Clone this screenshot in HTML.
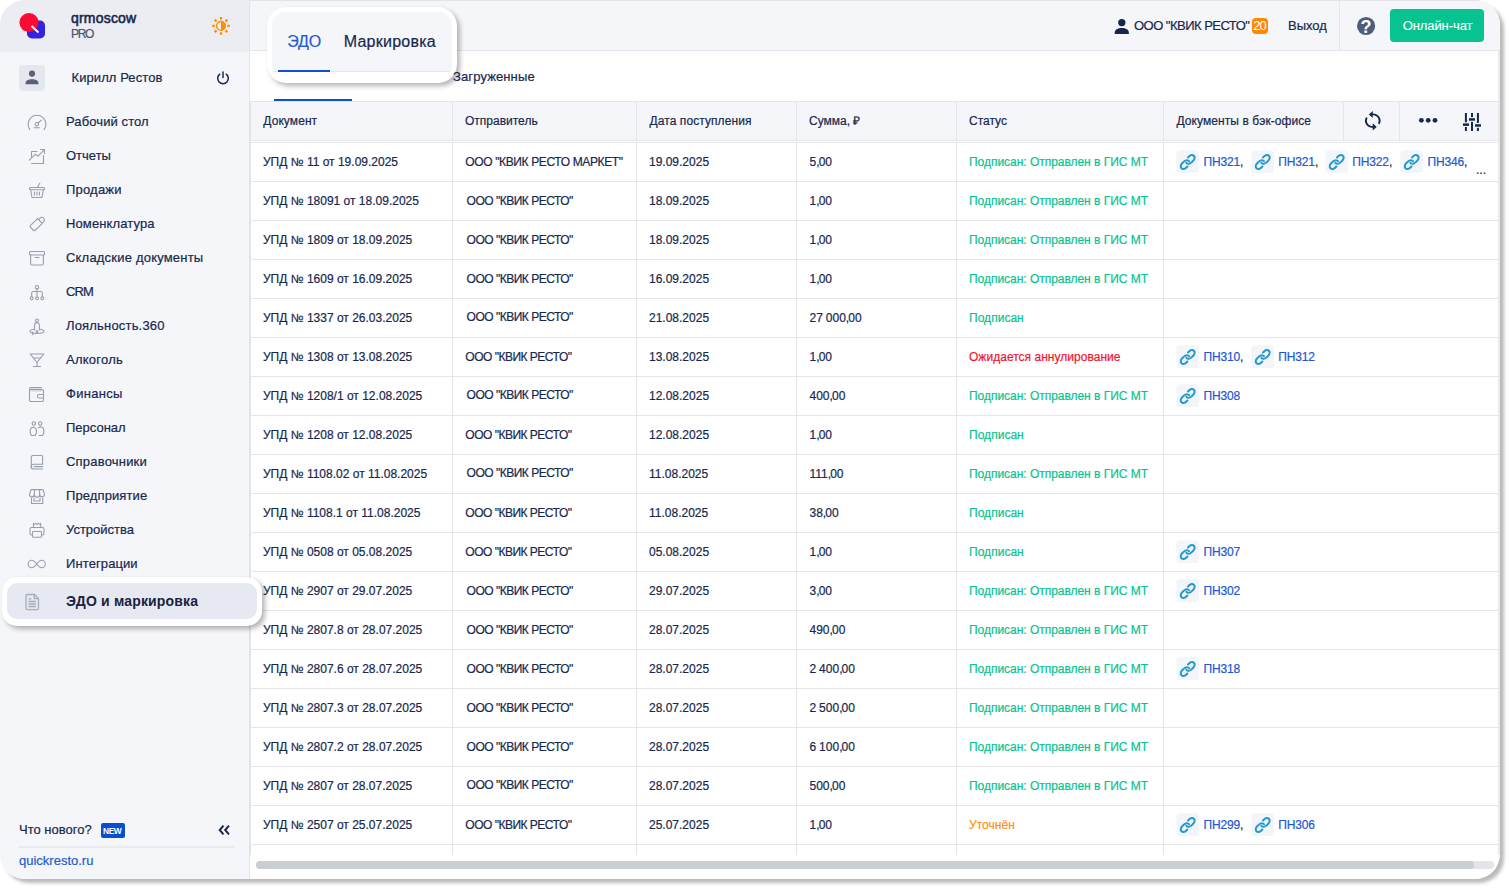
<!DOCTYPE html>
<html lang="ru"><head><meta charset="utf-8"><title>ЭДО и маркировка</title>
<style>
*{box-sizing:border-box;margin:0;padding:0}
html,body{width:1509px;height:888px;overflow:hidden;background:#fff}
body{font-family:"Liberation Sans",sans-serif;color:#17284d;font-size:12px;position:relative;-webkit-text-stroke:.2px currentColor}
.frame{position:absolute;left:0;top:0;width:1500px;height:879px;border-radius:25px;background:#fff;box-shadow:4px 4px 3.5px rgba(18,10,2,.28)}
.clip{position:absolute;left:0;top:0;width:1500px;height:879px;border-radius:25px;overflow:hidden}
.abs{position:absolute;white-space:nowrap}
.side{position:absolute;left:0;top:0;width:250px;height:879px;background:#f5f6fa}
.sidehead{position:absolute;left:0;top:0;width:250px;height:52px;background:#ecedf2}
.sideborder{position:absolute;left:249px;top:0;width:1px;height:879px;background:#e3e4e8}
.topbar{position:absolute;left:250px;top:0;width:1250px;height:50px;background:#f5f6fa;border-top:1px solid #e3e4e7}
.topline{position:absolute;left:250px;top:50px;width:1250px;height:1px;background:#e6e7ec}
.nav{position:absolute;left:66px;font-size:13px;line-height:16px;color:#17284d;white-space:nowrap}
.ico{position:absolute;left:26px;width:21px;height:21px;fill:none;stroke:#9096a6;stroke-width:1;stroke-linecap:round;stroke-linejoin:round}
.th{position:absolute;top:102px;height:38px;background:#f5f6fa}
.tht{position:absolute;top:114px;font-size:12px;line-height:15px;white-space:nowrap;color:#17284d}
.vl{position:absolute;top:102px;width:1px;height:753px;background:#e5e6ea}
.hl{position:absolute;left:251px;width:1247px;height:1px;background:#e5e6ea}
.c{position:absolute;font-size:12px;line-height:15px;white-space:nowrap}
.s{letter-spacing:-.5px}.cm{letter-spacing:-.9px}.st{letter-spacing:.03px}
.g{color:#07c390}.r{color:#f0152f}.o{color:#ff8f10}
.lnk{color:#2156d4;letter-spacing:-.15px}
.z{z-index:5}
.lk{position:absolute;width:23px;height:23px}
</style></head><body>
<div class="frame"></div>
<div class="clip">

<div class="side"></div><div class="sidehead"></div><div class="sideborder"></div><div class="abs" style="left:250px;top:51px;width:1px;height:828px;background:#fff"></div><div class="abs" style="left:250px;top:101px;width:1px;height:754px;background:#e3e4e8"></div>
<svg class="abs" style="left:18px;top:10px" width="30" height="32" viewBox="0 0 30 32"><rect x="9" y="10.500" width="18" height="18" rx="5" fill="#3323dc"/><circle cx="11" cy="12.500" r="9.600" fill="#fb0a35"/><path d="M13.500 16L20.500 22.500" stroke="#fff" stroke-width="2" stroke-linecap="butt"/></svg>
<div class="abs" id="t_qr" style="left:71px;top:10px;font-size:14px;line-height:17px;color:#17284d;letter-spacing:.2px;-webkit-text-stroke:.55px #17284d">qrmoscow</div>
<div class="abs" id="t_pro" style="left:71px;top:27px;font-size:12px;line-height:15px;color:#4a5270;letter-spacing:-1.3px">PRO</div>
<svg class="abs" style="left:209px;top:14px" width="24" height="24" viewBox="-12 -12 24 24"><g transform="translate(0,-0.100)"><circle cx="0" cy="0" r="4.350" fill="none" stroke="#ff8e05" stroke-width="1.500"/><path d="M0 -4.400a4.400 4.400 0 0 1 0 8.800z" fill="#ff8e05"/><g stroke="#ff8e05" stroke-width="2.300"><path d="M0 -8.800v2.500M0 6.300v2.500M-8.800 0h2.500M6.300 0h2.500"/><path d="M-6.300 -6.300l1.800 1.800M6.300 6.300l-1.800 -1.800M-6.300 6.300l1.800 -1.800M6.300 -6.300l-1.800 1.800"/></g></g></svg>
<div class="abs" style="left:19px;top:65px;width:26px;height:26px;border-radius:4px;background:#e4e7ee"></div>
<svg class="abs" style="left:24px;top:69px" width="16" height="17" viewBox="0 0 16 17"><circle cx="8" cy="4.600" r="3.100" fill="#59617a"/><path d="M1.500 14.500c0-3 3-4.300 6.500-4.300s6.500 1.300 6.500 4.300v.8h-13z" fill="#59617a"/></svg>
<div class="abs" id="t_user" style="left:71.500px;top:70px;font-size:13px;line-height:16px;letter-spacing:.08px">Кирилл Рестов</div>
<svg class="abs" style="left:215px;top:70px" width="16" height="16" viewBox="0 0 16 16" fill="none" stroke="#17284d" stroke-width="1.500" stroke-linecap="round"><path d="M8 2v5.500"/><path d="M4.800 4.200a5.300 5.300 0 1 0 6.400 0"/></svg>
<div class="nav" id="n0" style="top:114px;letter-spacing:.1px">Рабочий стол</div>
<div class="nav" id="n1" style="top:148px">Отчеты</div>
<div class="nav" id="n2" style="top:182px;letter-spacing:.2px">Продажи</div>
<div class="nav" id="n3" style="top:216px;letter-spacing:.12px">Номенклатура</div>
<div class="nav" id="n4" style="top:250px;letter-spacing:.2px">Складские документы</div>
<div class="nav" id="n5" style="top:284px;letter-spacing:-.9px">CRM</div>
<div class="nav" id="n6" style="top:318px;letter-spacing:.18px">Лояльность.360</div>
<div class="nav" id="n7" style="top:352px;letter-spacing:.25px">Алкоголь</div>
<div class="nav" id="n8" style="top:386px;letter-spacing:.3px">Финансы</div>
<div class="nav" id="n9" style="top:420px">Персонал</div>
<div class="nav" id="n10" style="top:454px;letter-spacing:.2px">Справочники</div>
<div class="nav" id="n11" style="top:488px;letter-spacing:.1px">Предприятие</div>
<div class="nav" id="n12" style="top:522px">Устройства</div>
<div class="nav" id="n13" style="top:556px;letter-spacing:.1px">Интеграции</div>
<svg class="abs" style="left:0;top:100px" width="60" height="520" viewBox="0 100 60 520" fill="none" stroke="#979eaf" stroke-width="1.100" stroke-linecap="round" stroke-linejoin="round">
<!-- dashboard -->
<path d="M29.930 129.600A8.900 8.900 0 1 1 44.070 129.600"/><circle cx="36.800" cy="124.200" r="1.700"/><path d="M38 123L41.300 120.100"/><path d="M34 127.800h5.600"/>
<!-- reports -->
<path d="M37 151.500H31.500V157M31.500 163.500H43.500V155.500"/><path d="M29.300 160.200L35.400 154.200L38 156.200L44.500 149.700"/><path d="M40.500 149.500H44.500V153.500"/>
<!-- basket -->
<rect x="29.500" y="187.500" width="15" height="2.200" rx="1"/><path d="M30.700 190L32 197.500H42L43.300 190"/><path d="M37.200 187.500L39.800 183.200"/><path d="M34.500 192v3M37 192v3M39.500 192v3"/>
<!-- tag -->
<path d="M30.300 225.700L37.600 218.700L42.300 223.300L35 230.500a1 1 0 0 1-1.300 0L30.300 227a1 1 0 0 1 0-1.300z"/><path d="M39.200 220.300a2.600 2.600 0 1 1 2.300 2.200"/>
<!-- box -->
<rect x="29.500" y="251.500" width="15" height="3.500" rx="1"/><path d="M30.600 255V263.500a1.500 1.500 0 0 0 1.500 1.500H41.900a1.500 1.500 0 0 0 1.500-1.500V255"/><path d="M35 257.500h4"/>
<!-- crm -->
<circle cx="37" cy="287.200" r="1.700"/><path d="M37 289v7"/><path d="M31.700 296.500V293a1.500 1.500 0 0 1 1.500-1.500H40.800a1.500 1.500 0 0 1 1.500 1.500V296.500"/><circle cx="31.700" cy="298.300" r="1.400"/><circle cx="37" cy="298.300" r="1.400"/><circle cx="42.300" cy="298.300" r="1.400"/>
<!-- loyalty -->
<circle cx="37" cy="320.500" r="1.500"/><path d="M34.600 330V325a2.400 2.400 0 0 1 4.800 0V330M36.300 330.500V333h1.400V330.500"/><path d="M34.500 329.300C31.500 329.600 30 330.400 30 331.300C30 332.600 33 333.500 37 333.500S44 332.600 44 331.300C44 330.400 42.500 329.600 39.500 329.300"/><path d="M32 332l1.500 1.200L32.300 334.600"/>
<!-- alcohol -->
<path d="M30.200 354H43.800L37 362.500z"/><path d="M37 362.500V366.500M33.500 366.500H40.500"/><path d="M33.300 358H40.700"/>
<!-- finance -->
<path d="M41.500 387.600H31a1.500 1.500 0 0 0-1.500 1.500V400a1.500 1.500 0 0 0 1.500 1.500H42a1.500 1.500 0 0 0 1.500-1.500V398.500M43.500 394.500V391a1.500 1.500 0 0 0-1.500-1.500H30"/><rect x="37.500" y="394.500" width="6.300" height="3.500" rx="1.500"/><rect x="30.500" y="390" width="12" height="1.500" fill="#d3d6df" stroke="none"/>
<!-- personnel -->
<circle cx="33.800" cy="423.500" r="1.700"/><circle cx="40.200" cy="423.500" r="1.700"/><path d="M33.500 427.200a3.300 3.300 0 0 0-3.300 3.300V433l1.300 2.500h3.600l1.300-2.500V430.500a3.300 3.300 0 0 0-2.900-3.300z"/><path d="M38.500 427.600a3.300 3.300 0 0 1 5.300 2.900V433l-1.300 2.500H39"/>
<!-- book -->
<path d="M42.600 464V456.500a1 1 0 0 0-1-1H33a1.700 1.700 0 0 0-1.700 1.700V466.700"/><path d="M42.600 464.300H33.500a2.300 2.300 0 0 0 0 4.700H42.600"/><path d="M34 466.600H42.600"/>
<!-- shop -->
<path d="M31 489.600H43L44.500 494.300a2.400 2.400 0 0 1-4.800 0.300a2.600 2.600 0 0 1-5.400 0a2.400 2.400 0 0 1-4.800-0.300z"/><path d="M34.500 489.600L34.300 494.500M39.500 489.600L39.700 494.500"/><path d="M31.500 498V503.500H42.800V498"/><path d="M34 498V501H40V498"/>
<!-- printer -->
<path d="M33.500 527.500V523.300l1.200 1l1.200-1l1.200 1l1.200-1l1.200 1l1.200-1V527.500"/><path d="M32.500 535H31.500a1.500 1.500 0 0 1-1.500-1.500V529a1.500 1.500 0 0 1 1.500-1.500H42.500a1.500 1.500 0 0 1 1.500 1.500v4.500a1.500 1.500 0 0 1-1.500 1.500H41.500"/><rect x="32.500" y="531.500" width="9" height="5.700" rx="0.800"/>
<!-- infinity -->
<path d="M36.700 564C34.800 561.500 33.600 560.300 31.800 560.300a3.700 3.700 0 0 0 0 7.400C33.600 567.700 34.800 566.500 36.700 564S39.800 560.300 41.600 560.300a3.700 3.700 0 0 1 0 7.400C39.800 567.700 38.600 566.500 36.700 564z"/>
</svg>
<div class="abs z" style="left:2px;top:577.100px;width:260px;height:48.500px;border-radius:15px;background:#fff;box-shadow:3px 3px 5px rgba(30,25,25,.32)"></div>
<div class="abs z" style="left:7.300px;top:582.600px;width:249.600px;height:36.900px;border-radius:10px;background:#e6e9f2"></div>
<svg class="abs z" style="left:20px;top:588px" width="26" height="28" viewBox="20 588 26 28" fill="none" stroke="#a7adbb" stroke-width="1.300" stroke-linecap="round" stroke-linejoin="round"><path d="M27.500 594.500H34.500L38.500 598.500V608a1.700 1.700 0 0 1-1.700 1.700H27.700A1.700 1.700 0 0 1 26 608V596a1.500 1.500 0 0 1 1.500-1.500z"/><path d="M34.300 594.700V598.700H38.300"/><path d="M29 601.500H35.500M29 604H35.500M29 606.500H35.500M29 598.800H31"/></svg>
<div class="nav z" id="nact" style="top:593px;font-size:14px;line-height:17px;font-weight:bold;color:#1a2240;letter-spacing:.17px;-webkit-text-stroke:0">ЭДО и маркировка</div>
<div class="abs" id="t_new" style="left:19px;top:822px;font-size:13px;line-height:16px">Что нового?</div>
<div class="abs" style="left:101px;top:823px;width:24px;height:15px;border-radius:2px;background:#064fce;color:#fff;font-size:8.400px;line-height:16.400px;font-weight:bold;text-align:center;letter-spacing:-.45px;padding-right:1.600px;-webkit-text-stroke:0">NEW</div>
<svg class="abs" style="left:217px;top:823px" width="14" height="14" viewBox="0 0 14 14" fill="none" stroke="#17284d" stroke-width="2"><path d="M6.500 2.700L2.700 7l3.800 4.300M12 2.700L8.200 7l3.800 4.300"/></svg>
<div class="abs" style="left:19px;top:846px;width:216px;height:2px;background:#e8eaf0"></div>
<div class="abs" id="t_site" style="left:19px;top:853px;font-size:13px;line-height:16px;color:#1f5ad0">quickresto.ru</div>
<div class="topbar"></div><div class="topline"></div>
<div class="abs" style="left:1339px;top:0;width:1px;height:50px;background:#e6e7ec"></div>
<svg class="abs" style="left:1113.200px;top:17.800px" width="18" height="18" viewBox="0 0 18 18"><circle cx="8.800" cy="4.600" r="3.650" fill="#14264c"/><path d="M1.700 16.100v-1.200c0-3.300 3.300-4.800 7.100-4.800s7.100 1.500 7.100 4.800v1.200z" fill="#14264c"/></svg>
<div class="abs" id="t_org" style="left:1134px;top:18px;font-size:13px;line-height:16px;letter-spacing:-.52px">ООО "КВИК РЕСТО"</div>
<div class="abs" style="left:1252px;top:18px;width:16px;height:16px;border-radius:4px;background:#ff8a00;color:#fff;font-size:13px;line-height:16px;text-align:center;letter-spacing:-.9px;text-indent:-.9px;-webkit-text-stroke:0">20</div>
<div class="abs" id="t_exit" style="left:1288px;top:18px;font-size:13px;line-height:16px">Выход</div>
<svg class="abs" style="left:1356px;top:16px" width="20" height="20" viewBox="0 0 20 20"><circle cx="10.100" cy="10" r="9.100" fill="#4f5d7c"/><text x="10" y="16.600" text-anchor="middle" font-family="Liberation Sans, sans-serif" font-weight="bold" font-size="18" fill="#fff" style="-webkit-text-stroke:0">?</text></svg>
<div class="abs" style="left:1390px;top:8.800px;width:94px;height:33.200px;border-radius:4px;background:#06c391;color:#fff;font-size:13px;line-height:33.400px;text-align:center;letter-spacing:-.08px;text-indent:1px;-webkit-text-stroke:.1px #fff" id="t_chat">Онлайн-чат</div>
<div class="abs" style="left:274px;top:99px;width:78px;height:2px;background:#0d4fd1"></div>
<div class="abs z" id="t_zagr" style="left:453px;top:69px;font-size:13px;line-height:16px;letter-spacing:.12px">Загруженные</div>
<div class="hl" style="top:101px"></div>
<div class="th" style="left:251px;width:1247px"></div>
<div class="vl" style="left:452px"></div>
<div class="vl" style="left:636px"></div>
<div class="vl" style="left:796px"></div>
<div class="vl" style="left:956px"></div>
<div class="vl" style="left:1163px"></div>
<div class="vl" style="left:1343px;height:38px"></div>
<div class="vl" style="left:1399px;height:38px"></div>
<div class="hl" style="top:140px"></div><div class="abs" style="left:251px;top:141px;width:1247px;height:1px;background:#fff"></div><div class="hl" style="top:142px"></div>
<div class="tht" id="h0" style="left:263.3px;letter-spacing:.08px">Документ</div>
<div class="tht" id="h1" style="left:465px">Отправитель</div>
<div class="tht" id="h2" style="left:649.5px;letter-spacing:.08px">Дата поступления</div>
<div class="tht" id="h3" style="left:809px">Сумма, ₽</div>
<div class="tht" id="h4" style="left:969px">Статус</div>
<div class="tht" id="h5" style="left:1176.5px;letter-spacing:.08px">Документы в бэк-офисе</div>
<svg class="abs" style="left:1360.700px;top:109.700px" width="23.550" height="21.400" viewBox="0 0 24 24" preserveAspectRatio="none" fill="#17284d"><path d="M12 4V1L8 5l4 4V6c3.310 0 6 2.690 6 6 0 1.010-.25 1.970-.7 2.800l1.460 1.460A7.930 7.930 0 0 0 20 12c0-4.420-3.580-8-8-8zm0 14c-3.310 0-6-2.690-6-6 0-1.010.25-1.970.7-2.800L5.240 7.740A7.930 7.930 0 0 0 4 12c0 4.420 3.580 8 8 8v3l4-4-4-4v3z"/></svg>
<svg class="abs" style="left:1418px;top:117px" width="21" height="7" viewBox="1418 117 21 7" fill="#17284d"><circle cx="1421.400" cy="120.300" r="2.400"/><circle cx="1428.200" cy="120.300" r="2.400"/><circle cx="1435" cy="120.300" r="2.400"/></svg>
<svg class="abs" style="left:1460px;top:110px" width="24" height="24" viewBox="1460 110 24 24" fill="#17284d"><rect x="1464.900" y="113" width="2" height="9.300"/><rect x="1464.900" y="127" width="2" height="4"/><rect x="1463" y="123.400" width="6" height="2.500"/><rect x="1471" y="113" width="2" height="4.200"/><rect x="1471" y="121.800" width="2" height="9.200"/><rect x="1469" y="118.200" width="6" height="2.500"/><rect x="1476.900" y="113" width="2" height="10"/><rect x="1476.900" y="127.800" width="2" height="3.200"/><rect x="1475" y="124.200" width="6" height="2.500"/></svg>
<div class="hl" style="top:181px"></div>
<div class="c d" style="left:263px;top:155px">УПД № 11 от 19.09.2025</div>
<div class="c s" style="left:465.3px;top:155px;letter-spacing:-.37px">ООО &quot;КВИК РЕСТО МАРКЕТ&quot;</div>
<div class="c dt" style="left:649px;top:155px">19.09.2025</div>
<div class="c sm" style="left:809.500px;top:155px;word-spacing:-.4px">5<span class="cm">,</span>00</div>
<div class="c st g" style="left:969px;top:155px;letter-spacing:-.03px">Подписан: Отправлен в ГИС МТ</div>
<svg class="lk" style="left:1176.3px;top:150.3px" viewBox="0 0 23 23"><rect x="0.300" y="0.300" width="22.600" height="23" rx="3.500" fill="#f4f5f9"/><g transform="translate(11.700,12) rotate(-45) scale(1.010,0.820) rotate(45) scale(0.725) translate(-12,-12)" fill="none" stroke="#219ad0" stroke-width="2" stroke-linecap="round" stroke-linejoin="round"><path vector-effect="non-scaling-stroke" d="M10 13a5 5 0 0 0 7.540.540l3-3a5 5 0 0 0-7.070-7.070l-1.720 1.710"/><path vector-effect="non-scaling-stroke" d="M14 11a5 5 0 0 0-7.540-.540l-3 3a5 5 0 0 0 7.070 7.070l1.710-1.710"/></g></svg>
<div class="c lnk" style="left:1203.5px;top:155px">ПН321<span style="color:#17284d">,</span></div>
<svg class="lk" style="left:1251.1px;top:150.3px" viewBox="0 0 23 23"><rect x="0.300" y="0.300" width="22.600" height="23" rx="3.500" fill="#f4f5f9"/><g transform="translate(11.700,12) rotate(-45) scale(1.010,0.820) rotate(45) scale(0.725) translate(-12,-12)" fill="none" stroke="#219ad0" stroke-width="2" stroke-linecap="round" stroke-linejoin="round"><path vector-effect="non-scaling-stroke" d="M10 13a5 5 0 0 0 7.540.540l3-3a5 5 0 0 0-7.070-7.070l-1.720 1.710"/><path vector-effect="non-scaling-stroke" d="M14 11a5 5 0 0 0-7.540-.540l-3 3a5 5 0 0 0 7.070 7.070l1.710-1.710"/></g></svg>
<div class="c lnk" style="left:1278.3px;top:155px">ПН321<span style="color:#17284d">,</span></div>
<svg class="lk" style="left:1325.1px;top:150.3px" viewBox="0 0 23 23"><rect x="0.300" y="0.300" width="22.600" height="23" rx="3.500" fill="#f4f5f9"/><g transform="translate(11.700,12) rotate(-45) scale(1.010,0.820) rotate(45) scale(0.725) translate(-12,-12)" fill="none" stroke="#219ad0" stroke-width="2" stroke-linecap="round" stroke-linejoin="round"><path vector-effect="non-scaling-stroke" d="M10 13a5 5 0 0 0 7.540.540l3-3a5 5 0 0 0-7.070-7.070l-1.720 1.710"/><path vector-effect="non-scaling-stroke" d="M14 11a5 5 0 0 0-7.540-.540l-3 3a5 5 0 0 0 7.070 7.070l1.710-1.710"/></g></svg>
<div class="c lnk" style="left:1352.3px;top:155px">ПН322<span style="color:#17284d">,</span></div>
<svg class="lk" style="left:1400.3px;top:150.3px" viewBox="0 0 23 23"><rect x="0.300" y="0.300" width="22.600" height="23" rx="3.500" fill="#f4f5f9"/><g transform="translate(11.700,12) rotate(-45) scale(1.010,0.820) rotate(45) scale(0.725) translate(-12,-12)" fill="none" stroke="#219ad0" stroke-width="2" stroke-linecap="round" stroke-linejoin="round"><path vector-effect="non-scaling-stroke" d="M10 13a5 5 0 0 0 7.540.540l3-3a5 5 0 0 0-7.070-7.070l-1.720 1.710"/><path vector-effect="non-scaling-stroke" d="M14 11a5 5 0 0 0-7.540-.540l-3 3a5 5 0 0 0 7.070 7.070l1.710-1.710"/></g></svg>
<div class="c lnk" style="left:1427.5px;top:155px">ПН346<span style="color:#17284d">,</span></div>
<div class="c" style="left:1476px;top:163px">...</div>
<div class="hl" style="top:220px"></div>
<div class="c d" style="left:263px;top:194px">УПД № 18091 от 18.09.2025</div>
<div class="c s" style="left:466.6px;top:194px">ООО &quot;КВИК РЕСТО&quot;</div>
<div class="c dt" style="left:649px;top:194px">18.09.2025</div>
<div class="c sm" style="left:809.500px;top:194px;word-spacing:-.4px">1<span class="cm">,</span>00</div>
<div class="c st g" style="left:969px;top:194px;letter-spacing:-.03px">Подписан: Отправлен в ГИС МТ</div>
<div class="hl" style="top:259px"></div>
<div class="c d" style="left:263px;top:233px">УПД № 1809 от 18.09.2025</div>
<div class="c s" style="left:466.6px;top:233px">ООО &quot;КВИК РЕСТО&quot;</div>
<div class="c dt" style="left:649px;top:233px">18.09.2025</div>
<div class="c sm" style="left:809.500px;top:233px;word-spacing:-.4px">1<span class="cm">,</span>00</div>
<div class="c st g" style="left:969px;top:233px;letter-spacing:-.03px">Подписан: Отправлен в ГИС МТ</div>
<div class="hl" style="top:298px"></div>
<div class="c d" style="left:263px;top:272px">УПД № 1609 от 16.09.2025</div>
<div class="c s" style="left:466.6px;top:272px">ООО &quot;КВИК РЕСТО&quot;</div>
<div class="c dt" style="left:649px;top:272px">16.09.2025</div>
<div class="c sm" style="left:809.500px;top:272px;word-spacing:-.4px">1<span class="cm">,</span>00</div>
<div class="c st g" style="left:969px;top:272px;letter-spacing:-.03px">Подписан: Отправлен в ГИС МТ</div>
<div class="hl" style="top:337px"></div>
<div class="c d" style="left:263px;top:311px">УПД № 1337 от 26.03.2025</div>
<div class="c s" style="left:466.6px;top:310px">ООО &quot;КВИК РЕСТО&quot;</div>
<div class="c dt" style="left:649px;top:311px">21.08.2025</div>
<div class="c sm" style="left:809.500px;top:311px;word-spacing:-.4px">27 000<span class="cm">,</span>00</div>
<div class="c st g" style="left:969px;top:311px">Подписан</div>
<div class="hl" style="top:376px"></div>
<div class="c d" style="left:263px;top:350px">УПД № 1308 от 13.08.2025</div>
<div class="c s" style="left:465.3px;top:350px">ООО &quot;КВИК РЕСТО&quot;</div>
<div class="c dt" style="left:649px;top:350px">13.08.2025</div>
<div class="c sm" style="left:809.500px;top:350px;word-spacing:-.4px">1<span class="cm">,</span>00</div>
<div class="c st r" style="left:969px;top:350px">Ожидается аннулирование</div>
<svg class="lk" style="left:1176.3px;top:345.3px" viewBox="0 0 23 23"><rect x="0.300" y="0.300" width="22.600" height="23" rx="3.500" fill="#f4f5f9"/><g transform="translate(11.700,12) rotate(-45) scale(1.010,0.820) rotate(45) scale(0.725) translate(-12,-12)" fill="none" stroke="#219ad0" stroke-width="2" stroke-linecap="round" stroke-linejoin="round"><path vector-effect="non-scaling-stroke" d="M10 13a5 5 0 0 0 7.540.540l3-3a5 5 0 0 0-7.070-7.070l-1.720 1.710"/><path vector-effect="non-scaling-stroke" d="M14 11a5 5 0 0 0-7.540-.540l-3 3a5 5 0 0 0 7.070 7.070l1.710-1.710"/></g></svg>
<div class="c lnk" style="left:1203.5px;top:350px">ПН310<span style="color:#17284d">,</span></div>
<svg class="lk" style="left:1251.1px;top:345.3px" viewBox="0 0 23 23"><rect x="0.300" y="0.300" width="22.600" height="23" rx="3.500" fill="#f4f5f9"/><g transform="translate(11.700,12) rotate(-45) scale(1.010,0.820) rotate(45) scale(0.725) translate(-12,-12)" fill="none" stroke="#219ad0" stroke-width="2" stroke-linecap="round" stroke-linejoin="round"><path vector-effect="non-scaling-stroke" d="M10 13a5 5 0 0 0 7.540.540l3-3a5 5 0 0 0-7.070-7.070l-1.720 1.710"/><path vector-effect="non-scaling-stroke" d="M14 11a5 5 0 0 0-7.540-.540l-3 3a5 5 0 0 0 7.070 7.070l1.710-1.710"/></g></svg>
<div class="c lnk" style="left:1278.3px;top:350px">ПН312</div>
<div class="hl" style="top:415px"></div>
<div class="c d" style="left:263px;top:389px">УПД № 1208/1 от 12.08.2025</div>
<div class="c s" style="left:466.6px;top:388px">ООО &quot;КВИК РЕСТО&quot;</div>
<div class="c dt" style="left:649px;top:389px">12.08.2025</div>
<div class="c sm" style="left:809.500px;top:389px;word-spacing:-.4px">400<span class="cm">,</span>00</div>
<div class="c st g" style="left:969px;top:389px;letter-spacing:-.03px">Подписан: Отправлен в ГИС МТ</div>
<svg class="lk" style="left:1176.3px;top:384.3px" viewBox="0 0 23 23"><rect x="0.300" y="0.300" width="22.600" height="23" rx="3.500" fill="#f4f5f9"/><g transform="translate(11.700,12) rotate(-45) scale(1.010,0.820) rotate(45) scale(0.725) translate(-12,-12)" fill="none" stroke="#219ad0" stroke-width="2" stroke-linecap="round" stroke-linejoin="round"><path vector-effect="non-scaling-stroke" d="M10 13a5 5 0 0 0 7.540.540l3-3a5 5 0 0 0-7.070-7.070l-1.720 1.710"/><path vector-effect="non-scaling-stroke" d="M14 11a5 5 0 0 0-7.540-.540l-3 3a5 5 0 0 0 7.070 7.070l1.710-1.710"/></g></svg>
<div class="c lnk" style="left:1203.5px;top:389px">ПН308</div>
<div class="hl" style="top:454px"></div>
<div class="c d" style="left:263px;top:428px">УПД № 1208 от 12.08.2025</div>
<div class="c s" style="left:465.3px;top:428px">ООО &quot;КВИК РЕСТО&quot;</div>
<div class="c dt" style="left:649px;top:428px">12.08.2025</div>
<div class="c sm" style="left:809.500px;top:428px;word-spacing:-.4px">1<span class="cm">,</span>00</div>
<div class="c st g" style="left:969px;top:428px">Подписан</div>
<div class="hl" style="top:493px"></div>
<div class="c d" style="left:263px;top:467px">УПД № 1108.02 от 11.08.2025</div>
<div class="c s" style="left:466.6px;top:466px">ООО &quot;КВИК РЕСТО&quot;</div>
<div class="c dt" style="left:649px;top:467px">11.08.2025</div>
<div class="c sm" style="left:809.500px;top:467px;word-spacing:-.4px">111<span class="cm">,</span>00</div>
<div class="c st g" style="left:969px;top:467px;letter-spacing:-.03px">Подписан: Отправлен в ГИС МТ</div>
<div class="hl" style="top:532px"></div>
<div class="c d" style="left:263px;top:506px">УПД № 1108.1 от 11.08.2025</div>
<div class="c s" style="left:465.3px;top:506px">ООО &quot;КВИК РЕСТО&quot;</div>
<div class="c dt" style="left:649px;top:506px">11.08.2025</div>
<div class="c sm" style="left:809.500px;top:506px;word-spacing:-.4px">38<span class="cm">,</span>00</div>
<div class="c st g" style="left:969px;top:506px">Подписан</div>
<div class="hl" style="top:571px"></div>
<div class="c d" style="left:263px;top:545px">УПД № 0508 от 05.08.2025</div>
<div class="c s" style="left:465.3px;top:545px">ООО &quot;КВИК РЕСТО&quot;</div>
<div class="c dt" style="left:649px;top:545px">05.08.2025</div>
<div class="c sm" style="left:809.500px;top:545px;word-spacing:-.4px">1<span class="cm">,</span>00</div>
<div class="c st g" style="left:969px;top:545px">Подписан</div>
<svg class="lk" style="left:1176.3px;top:540.3px" viewBox="0 0 23 23"><rect x="0.300" y="0.300" width="22.600" height="23" rx="3.500" fill="#f4f5f9"/><g transform="translate(11.700,12) rotate(-45) scale(1.010,0.820) rotate(45) scale(0.725) translate(-12,-12)" fill="none" stroke="#219ad0" stroke-width="2" stroke-linecap="round" stroke-linejoin="round"><path vector-effect="non-scaling-stroke" d="M10 13a5 5 0 0 0 7.540.540l3-3a5 5 0 0 0-7.070-7.070l-1.720 1.710"/><path vector-effect="non-scaling-stroke" d="M14 11a5 5 0 0 0-7.540-.540l-3 3a5 5 0 0 0 7.070 7.070l1.710-1.710"/></g></svg>
<div class="c lnk" style="left:1203.5px;top:545px">ПН307</div>
<div class="hl" style="top:610px"></div>
<div class="c d" style="left:263px;top:584px">УПД № 2907 от 29.07.2025</div>
<div class="c s" style="left:466.6px;top:584px">ООО &quot;КВИК РЕСТО&quot;</div>
<div class="c dt" style="left:649px;top:584px">29.07.2025</div>
<div class="c sm" style="left:809.500px;top:584px;word-spacing:-.4px">3<span class="cm">,</span>00</div>
<div class="c st g" style="left:969px;top:584px;letter-spacing:-.03px">Подписан: Отправлен в ГИС МТ</div>
<svg class="lk" style="left:1176.3px;top:579.3px" viewBox="0 0 23 23"><rect x="0.300" y="0.300" width="22.600" height="23" rx="3.500" fill="#f4f5f9"/><g transform="translate(11.700,12) rotate(-45) scale(1.010,0.820) rotate(45) scale(0.725) translate(-12,-12)" fill="none" stroke="#219ad0" stroke-width="2" stroke-linecap="round" stroke-linejoin="round"><path vector-effect="non-scaling-stroke" d="M10 13a5 5 0 0 0 7.540.540l3-3a5 5 0 0 0-7.070-7.070l-1.720 1.710"/><path vector-effect="non-scaling-stroke" d="M14 11a5 5 0 0 0-7.540-.540l-3 3a5 5 0 0 0 7.070 7.070l1.710-1.710"/></g></svg>
<div class="c lnk" style="left:1203.5px;top:584px">ПН302</div>
<div class="hl" style="top:649px"></div>
<div class="c d" style="left:263px;top:623px">УПД № 2807.8 от 28.07.2025</div>
<div class="c s" style="left:466.6px;top:623px">ООО &quot;КВИК РЕСТО&quot;</div>
<div class="c dt" style="left:649px;top:623px">28.07.2025</div>
<div class="c sm" style="left:809.500px;top:623px;word-spacing:-.4px">490<span class="cm">,</span>00</div>
<div class="c st g" style="left:969px;top:623px;letter-spacing:-.03px">Подписан: Отправлен в ГИС МТ</div>
<div class="hl" style="top:688px"></div>
<div class="c d" style="left:263px;top:662px">УПД № 2807.6 от 28.07.2025</div>
<div class="c s" style="left:466.6px;top:662px">ООО &quot;КВИК РЕСТО&quot;</div>
<div class="c dt" style="left:649px;top:662px">28.07.2025</div>
<div class="c sm" style="left:809.500px;top:662px;word-spacing:-.4px">2 400<span class="cm">,</span>00</div>
<div class="c st g" style="left:969px;top:662px;letter-spacing:-.03px">Подписан: Отправлен в ГИС МТ</div>
<svg class="lk" style="left:1176.3px;top:657.3px" viewBox="0 0 23 23"><rect x="0.300" y="0.300" width="22.600" height="23" rx="3.500" fill="#f4f5f9"/><g transform="translate(11.700,12) rotate(-45) scale(1.010,0.820) rotate(45) scale(0.725) translate(-12,-12)" fill="none" stroke="#219ad0" stroke-width="2" stroke-linecap="round" stroke-linejoin="round"><path vector-effect="non-scaling-stroke" d="M10 13a5 5 0 0 0 7.540.540l3-3a5 5 0 0 0-7.070-7.070l-1.720 1.710"/><path vector-effect="non-scaling-stroke" d="M14 11a5 5 0 0 0-7.540-.540l-3 3a5 5 0 0 0 7.070 7.070l1.710-1.710"/></g></svg>
<div class="c lnk" style="left:1203.5px;top:662px">ПН318</div>
<div class="hl" style="top:727px"></div>
<div class="c d" style="left:263px;top:701px">УПД № 2807.3 от 28.07.2025</div>
<div class="c s" style="left:466.6px;top:701px">ООО &quot;КВИК РЕСТО&quot;</div>
<div class="c dt" style="left:649px;top:701px">28.07.2025</div>
<div class="c sm" style="left:809.500px;top:701px;word-spacing:-.4px">2 500<span class="cm">,</span>00</div>
<div class="c st g" style="left:969px;top:701px;letter-spacing:-.03px">Подписан: Отправлен в ГИС МТ</div>
<div class="hl" style="top:766px"></div>
<div class="c d" style="left:263px;top:740px">УПД № 2807.2 от 28.07.2025</div>
<div class="c s" style="left:466.6px;top:740px">ООО &quot;КВИК РЕСТО&quot;</div>
<div class="c dt" style="left:649px;top:740px">28.07.2025</div>
<div class="c sm" style="left:809.500px;top:740px;word-spacing:-.4px">6 100<span class="cm">,</span>00</div>
<div class="c st g" style="left:969px;top:740px;letter-spacing:-.03px">Подписан: Отправлен в ГИС МТ</div>
<div class="hl" style="top:805px"></div>
<div class="c d" style="left:263px;top:779px">УПД № 2807 от 28.07.2025</div>
<div class="c s" style="left:466.6px;top:778px">ООО &quot;КВИК РЕСТО&quot;</div>
<div class="c dt" style="left:649px;top:779px">28.07.2025</div>
<div class="c sm" style="left:809.500px;top:779px;word-spacing:-.4px">500<span class="cm">,</span>00</div>
<div class="c st g" style="left:969px;top:779px;letter-spacing:-.03px">Подписан: Отправлен в ГИС МТ</div>
<div class="hl" style="top:844px"></div>
<div class="c d" style="left:263px;top:818px">УПД № 2507 от 25.07.2025</div>
<div class="c s" style="left:465.3px;top:818px">ООО &quot;КВИК РЕСТО&quot;</div>
<div class="c dt" style="left:649px;top:818px">25.07.2025</div>
<div class="c sm" style="left:809.500px;top:818px;word-spacing:-.4px">1<span class="cm">,</span>00</div>
<div class="c st o" style="left:969px;top:818px">Уточнён</div>
<svg class="lk" style="left:1176.3px;top:813.3px" viewBox="0 0 23 23"><rect x="0.300" y="0.300" width="22.600" height="23" rx="3.500" fill="#f4f5f9"/><g transform="translate(11.700,12) rotate(-45) scale(1.010,0.820) rotate(45) scale(0.725) translate(-12,-12)" fill="none" stroke="#219ad0" stroke-width="2" stroke-linecap="round" stroke-linejoin="round"><path vector-effect="non-scaling-stroke" d="M10 13a5 5 0 0 0 7.540.540l3-3a5 5 0 0 0-7.070-7.070l-1.720 1.710"/><path vector-effect="non-scaling-stroke" d="M14 11a5 5 0 0 0-7.540-.540l-3 3a5 5 0 0 0 7.070 7.070l1.710-1.710"/></g></svg>
<div class="c lnk" style="left:1203.5px;top:818px">ПН299<span style="color:#17284d">,</span></div>
<svg class="lk" style="left:1251.1px;top:813.3px" viewBox="0 0 23 23"><rect x="0.300" y="0.300" width="22.600" height="23" rx="3.500" fill="#f4f5f9"/><g transform="translate(11.700,12) rotate(-45) scale(1.010,0.820) rotate(45) scale(0.725) translate(-12,-12)" fill="none" stroke="#219ad0" stroke-width="2" stroke-linecap="round" stroke-linejoin="round"><path vector-effect="non-scaling-stroke" d="M10 13a5 5 0 0 0 7.540.540l3-3a5 5 0 0 0-7.070-7.070l-1.720 1.710"/><path vector-effect="non-scaling-stroke" d="M14 11a5 5 0 0 0-7.540-.540l-3 3a5 5 0 0 0 7.070 7.070l1.710-1.710"/></g></svg>
<div class="c lnk" style="left:1278.3px;top:818px">ПН306</div>
<div class="abs" style="left:251px;top:855px;width:1247px;height:24px;background:#fff"></div>
<div class="abs" style="left:1498px;top:51px;width:2px;height:804px;background:#e9eaed"></div>
<div class="abs" style="left:256px;top:861px;width:1238px;height:8px;border-radius:4px;background:#e4e5e8"></div>
<div class="abs" style="left:256px;top:861px;width:1218px;height:8px;border-radius:4px;background:#cbcdd4"></div>
<div class="abs" style="left:267.400px;top:6.700px;width:189.500px;height:76.300px;border-radius:19px;background:#fff;box-shadow:3px 3px 5px rgba(30,25,25,.32)"></div>
<div class="abs" style="left:272.200px;top:12.400px;width:179.800px;height:59.200px;border-radius:14px 14px 4px 4px;background:#f5f6fa"></div>
<div class="abs" style="left:273px;top:71px;width:177px;height:1px;background:#e6e7ec"></div>
<div class="abs" style="left:278px;top:70px;width:52px;height:2px;background:#0d4fd1"></div>
<div class="abs" id="t_edo" style="left:287.300px;letter-spacing:-.2px;top:32px;font-size:16px;line-height:19px;color:#1f5ad0">ЭДО</div>
<div class="abs" id="t_mark" style="left:343.700px;letter-spacing:.25px;top:32px;font-size:16px;line-height:19px">Маркировка</div>
</div></body></html>
